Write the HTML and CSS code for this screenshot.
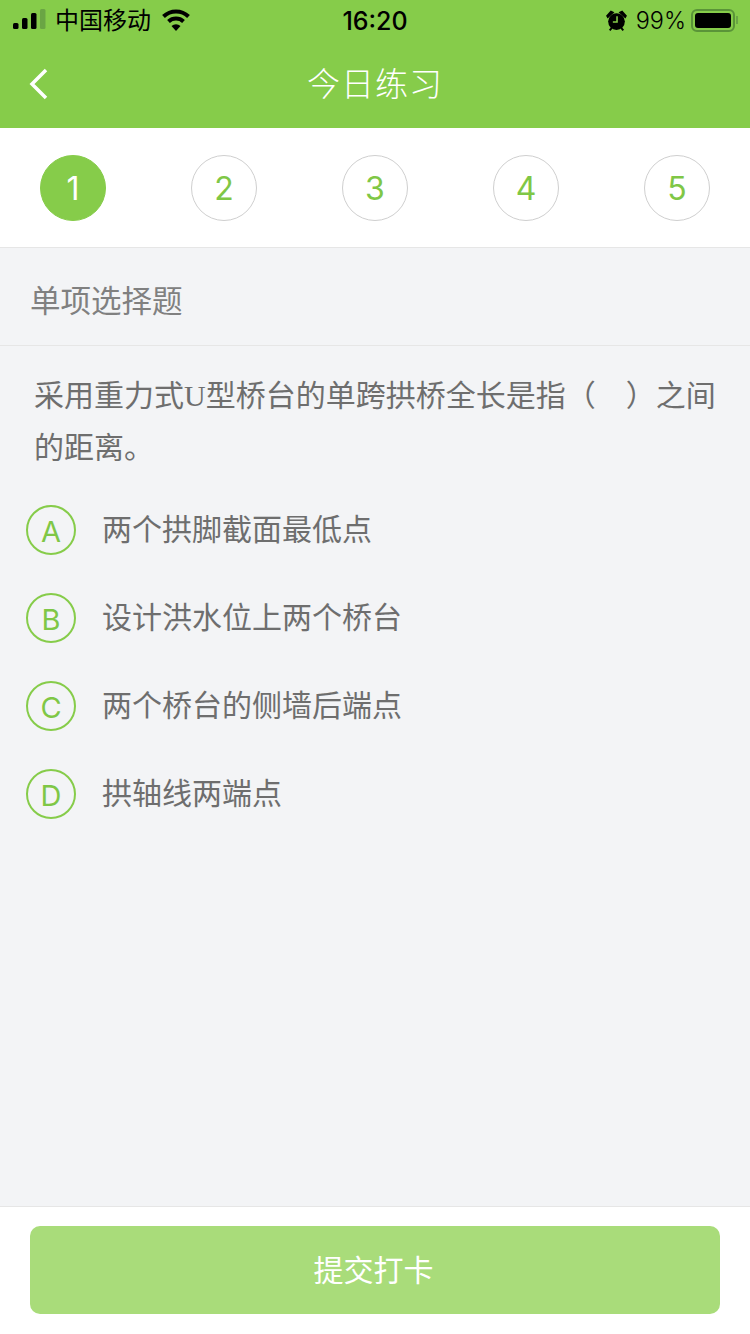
FILE: index.html
```html
<!DOCTYPE html>
<html lang="zh-CN">
<head>
    <meta charset="UTF-8">
    <meta name="viewport" content="width=device-width, initial-scale=1.0">
    <title>今日练习</title>
    <link rel="stylesheet" href="styles.css">
</head>
<body>
    <!-- Green header with status bar -->
    <div class="header">
        <div class="status_bar">
            <div class="status_left">
                <svg class="signal" width="33" height="20" viewBox="0 0 33 20">
                    <rect x="0" y="14" width="5.500" height="6" rx="1.500" fill="#000"/>
                    <rect x="9" y="9" width="5.500" height="11" rx="1.500" fill="#000"/>
                    <rect x="18" y="4" width="5.500" height="16" rx="1.500" fill="#000"/>
                    <rect x="27" y="0" width="5.500" height="20" rx="1.500" fill="#6aa544"/>
                </svg>
                <span class="carrier">中国移动</span>
                <svg class="wifi" width="30" height="22" viewBox="0 0 30 22">
                    <path d="M2.500 7.500A18 18 0 0 1 27.500 7.500" stroke="#000" stroke-width="4" fill="none"/>
                    <path d="M7.500 12.500A11 11 0 0 1 22.500 12.500" stroke="#000" stroke-width="4" fill="none"/>
                    <path d="M15 22L10.500 17A7 7 0 0 1 19.500 17z" fill="#000"/>
                </svg>
            </div>
            <div class="status_time">16:20</div>
            <div class="status_right">
                <svg class="alarm" width="21" height="23" viewBox="0 0 20 22">
                    <circle cx="10" cy="12" r="8" fill="#000"/>
                    <path d="M0 6.500L4.500 1.500 8 3 1.500 9zM20 6.500L15.500 1.500 12 3 18.500 9z" fill="#000"/>
                    <path d="M3.500 20.500l2-2.500M16.500 20.500l-2-2.500" stroke="#000" stroke-width="1.800"/>
                    <path d="M10.500 7v5.500H6.500" stroke="#86cc4a" stroke-width="1.500" fill="none"/>
                </svg>
                <span class="battery_text">99%</span>
                <div class="battery"><div class="battery_level"></div></div>
                <div class="battery_tip"></div>
            </div>
        </div>
        <div class="nav_bar">
            <svg class="back" width="20" height="32" viewBox="0 0 20 32">
                <path d="M17 2L3 16l14 14" stroke="#fff" stroke-width="3.500" fill="none"/>
            </svg>
            <h1>今日练习</h1>
        </div>
    </div>

    <!-- Question numbers -->
    <div class="steps">
        <div class="step active">1</div>
        <div class="step">2</div>
        <div class="step">3</div>
        <div class="step">4</div>
        <div class="step">5</div>
    </div>

    <div class="main">
        <div class="type_title">单项选择题</div>
        <p class="question">采用重力式U型桥台的单跨拱桥全长是指（&nbsp;&nbsp;&nbsp;&nbsp;）之间的距离。</p>
        <!-- Answer options -->
        <div class="options">
            <div class="option"><div class="letter">A</div><p>两个拱脚截面最低点</p></div>
            <div class="option"><div class="letter">B</div><p>设计洪水位上两个桥台</p></div>
            <div class="option"><div class="letter">C</div><p>两个桥台的侧墙后端点</p></div>
            <div class="option"><div class="letter">D</div><p>拱轴线两端点</p></div>
        </div>
    </div>

    <div class="footer">
        <div class="submit">提交打卡</div>
    </div>
</body>
</html>
```

FILE: styles.css
```css
*{
    margin: 0;
    padding: 0;
    box-sizing: border-box;
}
body{
    width: 750px;
    height: 1334px;
    display: flex;
    flex-direction: column;
    background-color: #f3f4f6;
    font-family: "Noto Sans CJK SC", "Noto Sans", sans-serif;
}
.header{
    height: 128px;
    background-color: #86cc4a;
}
.status_bar{
    height: 40px;
    display: flex;
    justify-content: space-between;
    align-items: center;
    position: relative;
    padding: 0 12px 0 13px;
    color: #000;
}
.status_left, .status_right{
    display: flex;
    align-items: center;
}
.signal{
    margin-bottom: 2px;
}
.carrier{
    margin-left: 9px;
    padding-bottom: 2px;
    font-size: 24px;
    line-height: 38px;
}
.wifi{
    margin-left: 10px;
}
.status_time{
    position: absolute;
    left: 0;
    right: 0;
    padding-top: 1px;
    text-align: center;
    font-family: "Inter", sans-serif;
    font-size: 25px;
    font-weight: 500;
}
.battery_text{
    margin-left: 9px;
    font-family: "Inter", sans-serif;
    font-size: 23.500px;
    font-weight: 300;
}
.battery{
    width: 44px;
    height: 23px;
    margin-left: 5px;
    padding: 2px;
    border: 2px solid #5a9438;
    border-radius: 6px;
}
.battery_level{
    height: 100%;
    background-color: #000;
    border-radius: 3px;
}
.battery_tip{
    width: 2px;
    height: 8px;
    margin-left: 1px;
    background-color: #6aa544;
}
.nav_bar{
    height: 88px;
    display: flex;
    align-items: center;
    justify-content: center;
    position: relative;
    padding-bottom: 4px;
}
.nav_bar h1{
    color: #fff;
    font-size: 33px;
    font-weight: 300;
    letter-spacing: 1px;
}
.back{
    position: absolute;
    left: 29px;
    top: 28px;
}
.steps{
    height: 120px;
    display: flex;
    justify-content: space-between;
    align-items: center;
    padding: 1px 40px 0;
    background-color: #fff;
    border-bottom: 1px solid #e6e6e6;
}
.step{
    width: 66px;
    height: 66px;
    border: 1px solid #cfcfcf;
    border-radius: 50%;
    display: flex;
    justify-content: center;
    align-items: center;
    color: #7fc746;
    font-family: "Inter", sans-serif;
    font-size: 32px;
}
.step.active{
    background-color: #86cc4a;
    border-color: #86cc4a;
    color: #fff;
}
.main{
    flex: 1;
}
.type_title{
    height: 98px;
    line-height: 102px;
    padding-left: 30px;
    color: #808080;
    font-size: 30.500px;
    border-bottom: 1px solid #e6e6e6;
}
.question{
    padding: 24px 30px 0 34px;
    color: #6e6e6e;
    font-family: "Liberation Serif", "Noto Sans CJK SC", serif;
    font-size: 30px;
    line-height: 52px;
}
.options{
    margin-top: 12px;
    padding-left: 26px;
}
.option{
    height: 88px;
    display: flex;
    align-items: center;
}
.letter{
    width: 50px;
    height: 50px;
    padding-top: 2px;
    border: 2px solid #86cc4a;
    border-radius: 50%;
    display: flex;
    justify-content: center;
    align-items: center;
    color: #7fc746;
    font-family: "Inter", sans-serif;
    font-size: 29px;
}
.option p{
    margin-left: 26px;
    padding-bottom: 6px;
    color: #6e6e6e;
    font-size: 30px;
}
.footer{
    height: 128px;
    padding: 19px 30px 0;
    background-color: #fff;
    border-top: 1px solid #e6e6e6;
}
.submit{
    height: 88px;
    line-height: 84px;
    padding-right: 3px;
    text-align: center;
    background-color: #a9dc7a;
    border-radius: 10px;
    color: #fff;
    font-size: 30px;
}
```
